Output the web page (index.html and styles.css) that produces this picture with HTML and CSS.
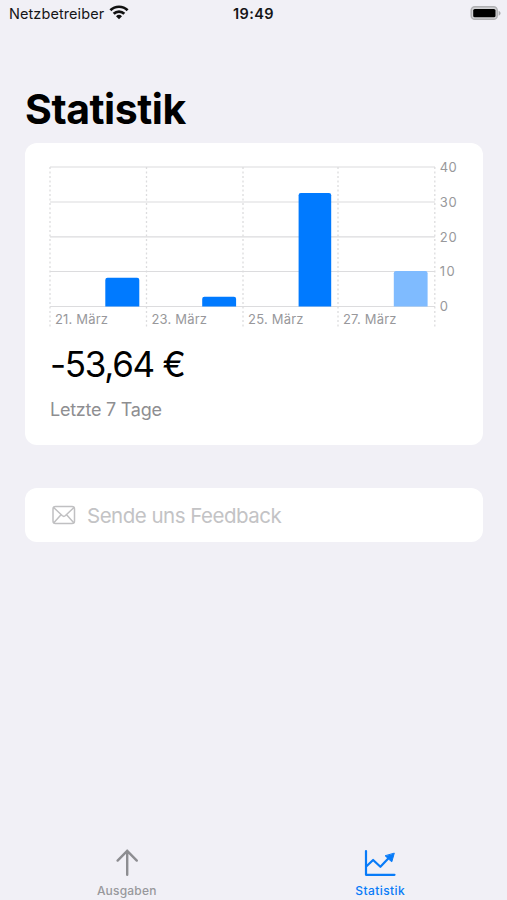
FILE: index.html
```
<!DOCTYPE html>
<html lang="de">
<head>
<meta charset="utf-8">
<title>Statistik</title>
<link rel="stylesheet" href="styles.css">
</head>
<body>
<div class="app">
  <header class="status">
    <div class="carrier"><span>Netzbetreiber</span>
      <svg class="wifi" width="20" height="16" viewBox="0 0 20 16"><g fill="none" stroke="#111" stroke-width="2.7"><path d="M1.4 6.300a12.200 12.200 0 0 1 17.200 0"/><path d="M4.700 9.800a7.500 7.500 0 0 1 10.600 0"/></g><path d="M10 15.300 7 12.200a4.300 4.300 0 0 1 6 0z" fill="#111"/></svg>
    </div>
    <time class="clock">19:49</time>
    <svg class="battery" width="31" height="16" viewBox="0 0 31 16"><rect x="1.200" y="1.700" width="26" height="12.600" rx="3.600" fill="#d2d2d5" stroke="#b0b0b3" stroke-width="1.500"/><rect x="3.200" y="3.900" width="22.300" height="8.400" rx="1.600" fill="#000"/><path d="M28.600 5.700c2.600 1.400 2.600 3.600 0 5z" fill="#aaaaad"/></svg>
  </header>
  <main>
    <h1>Statistik</h1>
    <section class="card">
      <svg class="chart" width="430" height="174" viewBox="45 158 430 174">
        <path class="grid" d="M50 167H435M50 202H435M50 236.800H435M50 271.500H435M50 306.500H435"/>
        <path class="days" d="M50 167V327M146.500 167V327M243 167V327M338 167V327M434.800 167V327"/>
        <g class="bars">
          <path d="M105.300 306.500V280q0-2.200 2.200-2.200h29.600q2.200 0 2.200 2.200v26.500z"/>
          <path d="M202.200 306.500V299q0-2.200 2.200-2.200h29.500q2.200 0 2.200 2.200v7.500z"/>
          <path d="M298.600 306.500V195.300q0-2.200 2.200-2.200h28.200q2.200 0 2.200 2.200v111.200z"/>
          <path class="today" d="M393.800 306.500V273.200q0-2.200 2.200-2.200h29.400q2.200 0 2.200 2.200v33.300z"/>
        </g>
        <g class="labels">
          <text x="55" y="324.300" textLength="53">21. März</text>
          <text x="151.500" y="324.300" textLength="55.500">23. März</text>
          <text x="248" y="324.300" textLength="55.500">25. März</text>
          <text x="343" y="324.300" textLength="53.500">27. März</text>
          <text x="439.800" y="171.700" textLength="17">40</text>
          <text x="439.800" y="206.700" textLength="16.800">30</text>
          <text x="439.800" y="241.500" textLength="16.800">20</text>
          <text x="439.800" y="276.300" textLength="15">10</text>
          <text x="439.800" y="311.200">0</text>
        </g>
      </svg>
      <p class="amount">-53,64 €</p>
      <p class="period">Letzte 7 Tage</p>
    </section>
    <a class="feedback">
      <svg width="24" height="20" viewBox="0 0 24 20" fill="none" stroke="#c0c0c2" stroke-width="1.500"><rect x="1" y="1.500" width="21.500" height="17" rx="2.500"/><path d="m1.600 2.500 8.800 8.300q1.400 1.200 2.800 0L22 2.500M1.600 18l7.200-8M22 18l-7.200-8"/></svg>
      <span>Sende uns Feedback</span>
    </a>
  </main>
  <nav class="tabs">
    <a class="tab">
      <svg width="34" height="30" viewBox="0 0 34 30" fill="none" stroke="#8d8d91" stroke-width="2.400" stroke-linecap="round" stroke-linejoin="round"><path d="M17.200 28.700V4.800M7.600 14.600l9.600-9.800 9.600 9.800"/></svg>
      <span>Ausgaben</span>
    </a>
    <a class="tab active">
      <svg width="34" height="30" viewBox="0 0 34 30" fill="none" stroke="#087bf8" stroke-width="2.200" stroke-linecap="round" stroke-linejoin="round"><path d="M3 5V28.800H31.500M3.500 20.300l6.600-6.300 7.300 6.800 9.500-10"/><path d="m31.200 7.500-2.400 8.300-2.400-2-4-3.800z" fill="#087bf8" stroke-width="1"/></svg>
      <span>Statistik</span>
    </a>
  </nav>
</div>
</body>
</html>
```
FILE: styles.css
```
* { box-sizing: border-box; }
body { margin: 0; background: #f1f0f6; font-family: Inter, "Liberation Sans", sans-serif; color: #000; }
.app { height: 900px; display: flex; flex-direction: column; overflow: hidden; }
.status { height: 28px; padding: 0 6px 0 9px; display: grid; grid-template-columns: 1fr auto 1fr; align-items: center; color: #151517; }
.carrier { display: flex; align-items: center; gap: 5px; font-size: 14.5px; letter-spacing: .08px; line-height: 28px; }
.carrier svg { margin-top: -4px; }
.clock { margin: -2px 3px 0 0; font-size: 14.5px; font-weight: 600; letter-spacing: .4px; }
.battery { justify-self: end; margin-top: -2px; }
main { flex: 1; padding: 0 24.500px 0 25px; }
h1 { margin: 56px 0 9px; font-size: 41px; line-height: 50px; font-weight: 700; letter-spacing: -.45px; }
.card { height: 302px; padding: 15px 8px 0 20px; border-radius: 12px; background: #fff; }
.chart { display: block; }
.grid { stroke: #dcdcde; stroke-width: 1.200; fill: none; }
.days { stroke: #dcdcde; stroke-width: 1.300; stroke-dasharray: 2 2.500; fill: none; }
.bars { fill: #007aff; }
.bars .today { fill: #7fbbff; }
.labels { font-size: 13px; fill: #98989b; }
.amount { margin: 11px 0 0 5px; font-size: 35px; line-height: 42px; letter-spacing: -1.3px; }
.period { margin: 13px 0 0 5px; font-size: 18px; line-height: 24px; letter-spacing: -.25px; color: #8e8e91; }
.feedback { height: 54px; margin-top: 43px; padding-left: 27px; border-radius: 12px; background: #fff; display: flex; align-items: center; gap: 11px; font-size: 20.500px; letter-spacing: -.5px; color: #c3c3c5; }
.tabs { height: 54px; display: flex; }
.tab { flex: 1; display: flex; flex-direction: column; align-items: center; font-size: 12px; line-height: 16px; font-weight: 500; letter-spacing: .2px; color: #98989c; }
.tab svg { margin-bottom: 7px; }
.tab.active { color: #087bf8; letter-spacing: .42px; }
```
